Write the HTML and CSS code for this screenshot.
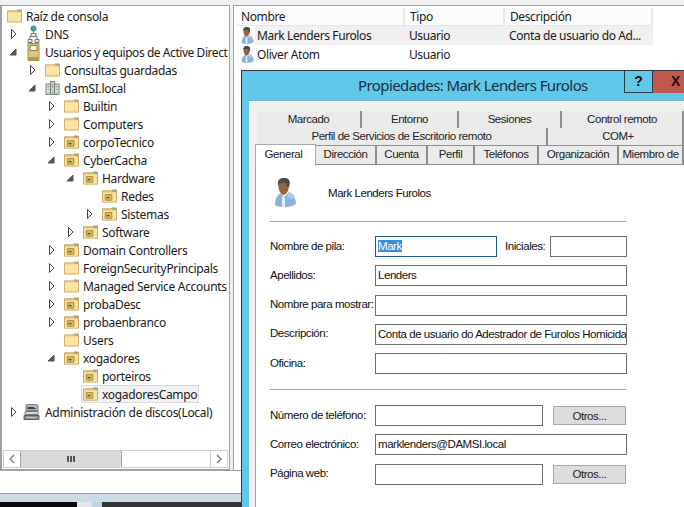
FILE: index.html
```html
<!DOCTYPE html>
<html lang="en">
<head>
    <meta charset="UTF-8">
    <title>Propiedades: Mark Lenders Furolos</title>
    <link rel="stylesheet" href="styles.css">
</head>
<body>
    <svg class="defs" width="0" height="0">
        <symbol id="i-folder" viewBox="0 0 16 14">
            <path d="M.5 13.500V1.500h9l1-1h5v13z" fill="#f0d48a" stroke="#cfaa5c"/>
            <path d="M1 13V3.500h14V13z" fill="#fae6a8"/>
            <path d="M1 12h14v1H1z" fill="#eccb79"/>
            <path d="M11 1h4v1.500h-4z" fill="#6aa7d8"/>
        </symbol>
        <symbol id="i-ou" viewBox="0 0 16 14">
            <path d="M.5 13.500V1.500h9l1-1h5v13z" fill="#eccd82" stroke="#c79f52"/>
            <path d="M1 13V3.500h14V13z" fill="#f8e3a6"/>
            <path d="M3.500 5.500h7v6h-7z" fill="#dcbd5e" stroke="#a68a36"/>
            <path d="M5 8h3v1.500H5z" fill="#5c5020"/>
            <path d="M11 1h4v1.500h-4z" fill="#5d9fd6"/>
        </symbol>
        <symbol id="i-dns" viewBox="0 0 12 18">
            <circle cx="6" cy="3.500" r="3" fill="#3f8fb8"/>
            <path d="M4 2.500l3-1 1 2-2 2z" fill="#5fae4a"/>
            <path d="M5.500 6h1v4h-1z" fill="#7a7a7a"/>
            <path d="M3.500 8.500h5v3h-5z" fill="#e8e8e8" stroke="#777"/>
            <path d="M.5 14.500h4v3h-4zM7.500 14.500h4v3h-4z" fill="#e8e8e8" stroke="#777"/>
            <path d="M2.500 11.500h7M2.500 11.500v3M9.500 11.500v3" fill="none" stroke="#777"/>
        </symbol>
        <symbol id="i-book" viewBox="0 0 12 18">
            <path d="M.5.500h11v17H.5z" fill="#dcc682" stroke="#a68f4c"/>
            <path d="M1 14h10v3H1z" fill="#b59c55"/>
            <path d="M2.500 2.500h7v5h-7z" fill="#fbf6df" stroke="#8f7c40"/>
        </symbol>
        <symbol id="i-domain" viewBox="0 0 16 16">
            <path d="M5.500.500h5v15h-5z" fill="#c9ccc9" stroke="#6f7370"/>
            <path d="M.5 3.500h5v12h-5zM10.500 3.500h5v12h-5z" fill="#e1e3e1" stroke="#6f7370"/>
            <path d="M2 6h2v1H2zM7 3h2v1H7zM12 6h2v1h-2zM2 9h2v1H2zM7 6h2v1H7zM12 9h2v1h-2z" fill="#7d817e"/>
            <path d="M2 13h2v1H2zM7 13h2v1H7zM12 13h2v1h-2z" fill="#3fbf4a"/>
        </symbol>
        <symbol id="i-disk" viewBox="0 0 16 16">
            <path d="M2.500 1.500l2-1h8l2 1v5h-12z" fill="#b4b7b9" stroke="#777a7c"/>
            <path d="M4 3h8v2H4z" fill="#3b3e40"/>
            <path d="M10.500 3h2v1h-2z" fill="#6ed04c"/>
            <path d="M1.500 7.500h13v3h-13z" fill="#d6d8d9" stroke="#7a7d7f"/>
            <path d="M.5 11.500h15v4H.5z" fill="#8b8d8f" stroke="#5e6062"/>
            <path d="M3 13h10v1H3z" fill="#c4c6c7"/>
        </symbol>
        <symbol id="i-user" viewBox="0 0 22 31">
            <path d="M0 27C0 21 2 17 6 15l3 4 5-5c4 2 7 6 7 12-6 4-16 4-21 1z" fill="#8ab3db"/>
            <path d="M7 18l3 2v9H7z" fill="#e6eef5"/>
            <path d="M14 14c3 1 5 3 6 6l-4 1-4-3z" fill="#a9cbe8"/>
            <path d="M3 5c3 0 6 0 8-1l3 2c0 5-1 9-5 11C5 17 3 10 3 5z" fill="#95653f"/>
            <path d="M3 6C2 2 6-1 10 0c4 0 6 3 4 9h-2l-1-4c-3 0-6 0-8 1z" fill="#4a4c4e"/>
        </symbol>
    </svg>

    <div class="console">
        <div class="panes">
            <div class="tree-panel">
                <ul class="tree">
                    <li class="node root"><svg class="ic"><use href="#i-folder"/></svg><span class="lbl">Raíz de consola</span></li>
                    <li class="node"><svg class="arrow-ic"><path d="M4.500 1.500v9l4.500-4.500z"/></svg><svg class="ic ic-sm"><use href="#i-dns"/></svg><span class="lbl">DNS</span></li>
                    <li class="node"><svg class="arrow-ic open"><path d="M9 3v6H3z"/></svg><svg class="ic ic-sm"><use href="#i-book"/></svg><span class="lbl tight">Usuarios y equipos de Active Direct</span></li>
                    <li class="node lv1"><svg class="arrow-ic"><path d="M4.500 1.500v9l4.500-4.500z"/></svg><svg class="ic"><use href="#i-folder"/></svg><span class="lbl">Consultas guardadas</span></li>
                    <li class="node lv1"><svg class="arrow-ic open"><path d="M9 3v6H3z"/></svg><svg class="ic"><use href="#i-domain"/></svg><span class="lbl">damSI.local</span></li>
                    <li class="node lv2"><svg class="arrow-ic"><path d="M4.500 1.500v9l4.500-4.500z"/></svg><svg class="ic"><use href="#i-folder"/></svg><span class="lbl">Builtin</span></li>
                    <li class="node lv2"><svg class="arrow-ic"><path d="M4.500 1.500v9l4.500-4.500z"/></svg><svg class="ic"><use href="#i-folder"/></svg><span class="lbl">Computers</span></li>
                    <li class="node lv2"><svg class="arrow-ic"><path d="M4.500 1.500v9l4.500-4.500z"/></svg><svg class="ic"><use href="#i-ou"/></svg><span class="lbl">corpoTecnico</span></li>
                    <li class="node lv2"><svg class="arrow-ic open"><path d="M9 3v6H3z"/></svg><svg class="ic"><use href="#i-ou"/></svg><span class="lbl">CyberCacha</span></li>
                    <li class="node lv3"><svg class="arrow-ic open"><path d="M9 3v6H3z"/></svg><svg class="ic"><use href="#i-ou"/></svg><span class="lbl">Hardware</span></li>
                    <li class="node lv4"><span class="arrow"></span><svg class="ic"><use href="#i-ou"/></svg><span class="lbl">Redes</span></li>
                    <li class="node lv4"><svg class="arrow-ic"><path d="M4.500 1.500v9l4.500-4.500z"/></svg><svg class="ic"><use href="#i-ou"/></svg><span class="lbl">Sistemas</span></li>
                    <li class="node lv3"><svg class="arrow-ic"><path d="M4.500 1.500v9l4.500-4.500z"/></svg><svg class="ic"><use href="#i-ou"/></svg><span class="lbl">Software</span></li>
                    <li class="node lv2"><svg class="arrow-ic"><path d="M4.500 1.500v9l4.500-4.500z"/></svg><svg class="ic"><use href="#i-ou"/></svg><span class="lbl">Domain Controllers</span></li>
                    <li class="node lv2"><svg class="arrow-ic"><path d="M4.500 1.500v9l4.500-4.500z"/></svg><svg class="ic"><use href="#i-folder"/></svg><span class="lbl">ForeignSecurityPrincipals</span></li>
                    <li class="node lv2"><svg class="arrow-ic"><path d="M4.500 1.500v9l4.500-4.500z"/></svg><svg class="ic"><use href="#i-folder"/></svg><span class="lbl">Managed Service Accounts</span></li>
                    <li class="node lv2"><svg class="arrow-ic"><path d="M4.500 1.500v9l4.500-4.500z"/></svg><svg class="ic"><use href="#i-ou"/></svg><span class="lbl">probaDesc</span></li>
                    <li class="node lv2"><svg class="arrow-ic"><path d="M4.500 1.500v9l4.500-4.500z"/></svg><svg class="ic"><use href="#i-ou"/></svg><span class="lbl">probaenbranco</span></li>
                    <li class="node lv2"><span class="arrow"></span><svg class="ic"><use href="#i-folder"/></svg><span class="lbl">Users</span></li>
                    <li class="node lv2"><svg class="arrow-ic open"><path d="M9 3v6H3z"/></svg><svg class="ic"><use href="#i-ou"/></svg><span class="lbl">xogadores</span></li>
                    <li class="node lv3"><span class="arrow"></span><svg class="ic"><use href="#i-ou"/></svg><span class="lbl">porteiros</span></li>
                    <li class="node lv3"><span class="arrow"></span><span class="picked"><svg class="ic"><use href="#i-ou"/></svg><span class="lbl">xogadoresCampo</span></span></li>
                    <li class="node"><svg class="arrow-ic"><path d="M4.500 1.500v9l4.500-4.500z"/></svg><svg class="ic ic-disk"><use href="#i-disk"/></svg><span class="lbl">Administración de discos(Local)</span></li>
                </ul>
                <div class="hscroll">
                    <span class="hs-btn"><svg width="8" height="10"><path d="M6 1L2 5l4 4" fill="none" stroke="#777" stroke-width="1.300"/></svg></span>
                    <span class="hs-thumb"><i></i><i></i><i></i></span>
                    <span class="hs-track"></span>
                    <span class="hs-btn"><svg width="8" height="10"><path d="M2 1l4 4-4 4" fill="none" stroke="#777" stroke-width="1.300"/></svg></span>
                </div>
            </div>

            <div class="list-panel">
                <div class="list-head">
                    <span class="col c-name">Nombre</span>
                    <span class="col c-type">Tipo</span>
                    <span class="col c-desc">Descripción</span>
                </div>
                <div class="list-row">
                    <svg class="ic-user"><use href="#i-user"/></svg>
                    <div class="row-cells picked-row">
                        <span class="cell c-name2">Mark Lenders Furolos</span>
                        <span class="cell c-type2">Usuario</span>
                        <span class="cell c-desc2">Conta de usuario do Ad...</span>
                    </div>
                </div>
                <div class="list-row">
                    <svg class="ic-user"><use href="#i-user"/></svg>
                    <div class="row-cells">
                        <span class="cell c-name2">Oliver Atom</span>
                        <span class="cell c-type2">Usuario</span>
                    </div>
                </div>
            </div>
        </div>
        <div class="status"></div>
        <div class="band"></div>
        <div class="taskbar"><span class="tb-a"></span><span class="tb-b"></span><span class="tb-c"></span><span class="tb-d"></span></div>
    </div>

    <div class="dialog">
        <div class="titlebar">
            <span class="title">Propiedades: Mark Lenders Furolos</span>
            <span class="tb-help">?</span>
            <span class="tb-close">X</span>
        </div>
        <div class="dlg-body">
            <div class="tabs row-a">
                <span class="tab">Marcado</span>
                <span class="tab">Entorno</span>
                <span class="tab">Sesiones</span>
                <span class="tab">Control remoto</span>
            </div>
            <div class="tabs row-b">
                <span class="tab">Perfil de Servicios de Escritorio remoto</span>
                <span class="tab tab-com">COM+</span>
            </div>
            <div class="tabs row-c">
                <span class="tab active">General</span>
                <span class="tab">Dirección</span>
                <span class="tab">Cuenta</span>
                <span class="tab">Perfil</span>
                <span class="tab">Teléfonos</span>
                <span class="tab">Organización</span>
                <span class="tab">Miembro de</span>
            </div>
            <div class="page">
                <div class="who">
                    <svg class="avatar"><use href="#i-user"/></svg>
                    <span class="who-name">Mark Lenders Furolos</span>
                </div>
                <hr class="sep">
                <div class="form">
                    <div class="frow">
                        <label>Nombre de pila:</label>
                        <div class="field f-first focus"><span class="sel">Mark</span></div>
                        <label class="lbl-ini">Iniciales:</label>
                        <div class="field f-ini"></div>
                    </div>
                    <div class="frow">
                        <label>Apellidos:</label>
                        <div class="field">Lenders</div>
                    </div>
                    <div class="frow">
                        <label>Nombre para mostrar:</label>
                        <div class="field"></div>
                    </div>
                    <div class="frow">
                        <label>Descripción:</label>
                        <div class="field">Conta de usuario do Adestrador de Furolos Homicida</div>
                    </div>
                    <div class="frow">
                        <label>Oficina:</label>
                        <div class="field"></div>
                    </div>
                </div>
                <hr class="sep">
                <div class="form">
                    <div class="frow">
                        <label>Número de teléfono:</label>
                        <div class="field f-short"></div>
                        <button class="btn">Otros...</button>
                    </div>
                    <div class="frow">
                        <label>Correo electrónico:</label>
                        <div class="field">marklenders@DAMSI.local</div>
                    </div>
                    <div class="frow">
                        <label>Página web:</label>
                        <div class="field f-short"></div>
                        <button class="btn">Otros...</button>
                    </div>
                </div>
            </div>
        </div>
    </div>
</body>
</html>
```

FILE: styles.css
```css
html, body {
    margin: 0;
    height: 507px;
    overflow: hidden;
}

body {
    position: relative;
    background: #f0f0f0;
    font-family: 'Noto Sans', sans-serif;
    color: #1a1a1a;
}

.defs {
    position: absolute;
}

.console {
    display: flex;
    flex-direction: column;
    height: 507px;
    padding-top: 5px;
    box-sizing: border-box;
}

.panes {
    display: flex;
    gap: 3px;
    height: 466px;
    flex: none;
    border-bottom: 1px solid #a0a0a0;
    box-sizing: border-box;
}

/* Tree side */
.tree-panel {
    width: 230px;
    flex: none;
    box-sizing: border-box;
    background: white;
    border: 1px solid #a0a0a0;
    border-left-width: 2px;
    display: flex;
    flex-direction: column;
}

.tree {
    list-style: none;
    margin: 0;
    padding: 1px 0 0 0;
    flex: 1;
}

.node {
    display: flex;
    align-items: center;
    height: 18px;
    padding-left: 5px;
    font-size: 12px;
    letter-spacing: -0.3px;
    white-space: nowrap;
}

.lv1 { padding-left: 24px; }
.lv2 { padding-left: 43px; }
.lv3 { padding-left: 62px; }
.lv4 { padding-left: 81px; }

.arrow, .arrow-ic {
    width: 19px;
    height: 12px;
    flex: none;
}

.arrow-ic path {
    fill: white;
    stroke: #444;
}

.arrow-ic.open path {
    fill: #555;
    stroke: #555;
}

.ic {
    width: 15px;
    height: 14px;
    margin-right: 4px;
    flex: none;
}

.ic-sm {
    height: 18px;
}

.ic-disk {
    height: 16px;
    width: 17px;
    margin-left: -3px;
    margin-right: 5px;
}

.lbl.tight {
    letter-spacing: -0.44px;
}

.picked {
    display: flex;
    align-items: center;
    height: 18px;
    margin-left: -2px;
    padding: 0 2px;
    background: #f2f2f2;
    outline: 1px solid #d9d9d9;
    outline-offset: -1px;
}

.hscroll {
    display: flex;
    height: 16px;
    margin: 0 1px 1px 1px;
    border: 1px solid #cfcfcf;
}

.hs-btn {
    width: 16px;
    display: flex;
    align-items: center;
    justify-content: center;
    background: white;
}

.hs-thumb {
    width: 100px;
    background: #d9d9d9;
    border-left: 1px solid #a8a8a8;
    border-right: 1px solid #a8a8a8;
    display: flex;
    align-items: center;
    justify-content: center;
    gap: 1px;
}

.hs-thumb i {
    width: 2px;
    height: 6px;
    background: #555;
}

.hs-track {
    flex: 1;
    border-right: 1px solid #cfcfcf;
}

.status {
    height: 22px;
    flex: none;
    background: white;
    border-bottom: 1px solid #a0a0a0;
}

.band {
    height: 8px;
    flex: none;
    background: #cbdce6;
}

.taskbar {
    display: flex;
    height: 5px;
    flex: none;
}

.tb-a { width: 77px; background: #0a0a0a; }
.tb-b { width: 15px; background: #e6e6e6; }
.tb-c { width: 10px; background: #bcd6e4; }
.tb-d { flex: 1; background: #333; }

/* List side */
.list-panel {
    flex: 1;
    padding: 2px 0 0 2px;
    background: white;
    border-top: 1px solid #a0a0a0;
    border-left: 1px solid #a0a0a0;
    font-size: 12px;
    letter-spacing: -0.4px;
}

.list-head {
    display: flex;
    height: 18px;
    background: #fff;
}

.col {
    box-sizing: border-box;
    padding: 0 0 0 5px;
    line-height: 17px;
    background: #fbfbfb;
    border-bottom: 1px solid #e8e8e8;
    border-right: 2px solid #e8e8e8;
}

.c-name { width: 169px; }
.c-type { width: 100px; }
.c-desc { width: 148px; }

.list-row {
    display: flex;
    align-items: center;
    height: 19px;
    padding-left: 5px;
}

.ic-user {
    width: 14px;
    height: 18px;
    flex: none;
}

.row-cells {
    display: flex;
    height: 19px;
    width: 398px;
    line-height: 19px;
}

.picked-row {
    background: #f0f0f0;
}

.cell {
    padding-left: 2px;
    box-sizing: border-box;
}

.c-name2 { width: 150px; }
.c-type2 { width: 100px; padding-left: 4px; }
.c-desc2 { width: 148px; padding-left: 4px; }

/* Properties window */
.dialog {
    position: absolute;
    left: 241px;
    top: 70px;
    width: 443px;
    height: 437px;
    box-sizing: border-box;
    padding: 0 0 0 7px;
    background: #62c8ea;
    border-top: 1px solid #2f3a40;
    border-left: 1px solid #2f3a40;
    display: flex;
    flex-direction: column;
}

.titlebar {
    display: flex;
    height: 29px;
    flex: none;
}

.title {
    margin-left: 109px;
    width: 266px;
    flex: none;
    font-size: 15px;
    line-height: 29px;
    letter-spacing: -0.58px;
    color: #17303f;
    white-space: nowrap;
}

.tb-help, .tb-close {
    flex: none;
    height: 22px;
    line-height: 20px;
    font-family: 'Liberation Sans', sans-serif;
    font-size: 14px;
    font-weight: bold;
    color: #111;
    box-sizing: border-box;
}

.tb-help {
    width: 29px;
    text-align: center;
    border: 1px solid #2f3a40;
    border-top: none;
}

.tb-close {
    width: 31px;
    background: #c1584f;
    padding-left: 18px;
}

.dlg-body {
    flex: 1;
    background: #f0f0f0;
    border-top: 1px solid #76b4cc;
    padding: 10px 0 0 8px;
    font-family: 'Liberation Sans', sans-serif;
    font-size: 11.500px;
    letter-spacing: -0.45px;
    color: #111;
    display: flex;
    flex-direction: column;
}

.tabs {
    display: grid;
    text-align: center;
    color: #222;
}

.row-a {
    height: 17px;
    grid-template-columns: 105px 97px 103px 1fr;
}

.row-b {
    height: 18px;
    grid-template-columns: 291px 1fr;
}

.row-c {
    height: 19px;
    grid-template-columns: 59px 61px 51px 47px 64px 80px 1fr;
}

.tab {
    box-sizing: border-box;
    background: #ebebeb;
    border-right: 2px solid #8e8e8e;
    border-bottom: 1px solid #8e8e8e;
    line-height: 17px;
    white-space: nowrap;
}

.tab-com {
    padding-left: 6px;
}

.row-a .tab:first-child {
    border-bottom-color: #5a8fb5;
}

.tab.active {
    position: relative;
    margin: -2px 0 -1px -2px;
    padding-right: 4px;
    background: white;
    border: 1px solid #a8a8a8;
    border-bottom: none;
    line-height: 19px;
}

.page {
    flex: 1;
    margin-left: -2px;
    background: white;
    border-left: 1px solid #a0a0a0;
    padding: 13px 0 0 14px;
}

.who {
    display: flex;
    align-items: center;
    height: 31px;
    gap: 31px;
    padding-left: 5px;
}

.who-name {
    margin-top: -2px;
}

.avatar {
    width: 22px;
    height: 31px;
}

.sep {
    width: 356px;
    height: 1px;
    margin: 12px 0 14px 0;
    border: none;
    background: #a0a0a0;
}

.form + .sep {
    margin-top: 15px;
    margin-bottom: 15px;
}

.form {
    display: flex;
    flex-direction: column;
    gap: 8.300px;
    width: 357px;
}

.frow {
    display: flex;
    align-items: center;
    height: 21px;
}

.frow label {
    width: 105px;
    flex: none;
    padding-bottom: 2px;
    white-space: nowrap;
}

.field {
    flex: 1;
    height: 21px;
    box-sizing: border-box;
    padding-left: 2px;
    border: 1px solid #6e6e6e;
    background: white;
    line-height: 19px;
    white-space: nowrap;
    overflow: hidden;
}

.f-first {
    flex: none;
    width: 122px;
}

.focus {
    border-color: #1f5f96;
}

.sel {
    background: #3a8ee0;
    color: white;
}

.frow .lbl-ini {
    width: 45px;
    margin-left: 8px;
}

.f-ini {
    flex: none;
    width: 77px;
}

.f-short {
    flex: none;
    width: 168px;
}

.btn {
    width: 73px;
    height: 19px;
    margin-left: 10px;
    padding: 0;
    border: 1px solid #a8a8a8;
    background: #dcdcdc;
    font: inherit;
    letter-spacing: inherit;
    color: #222;
}
```
